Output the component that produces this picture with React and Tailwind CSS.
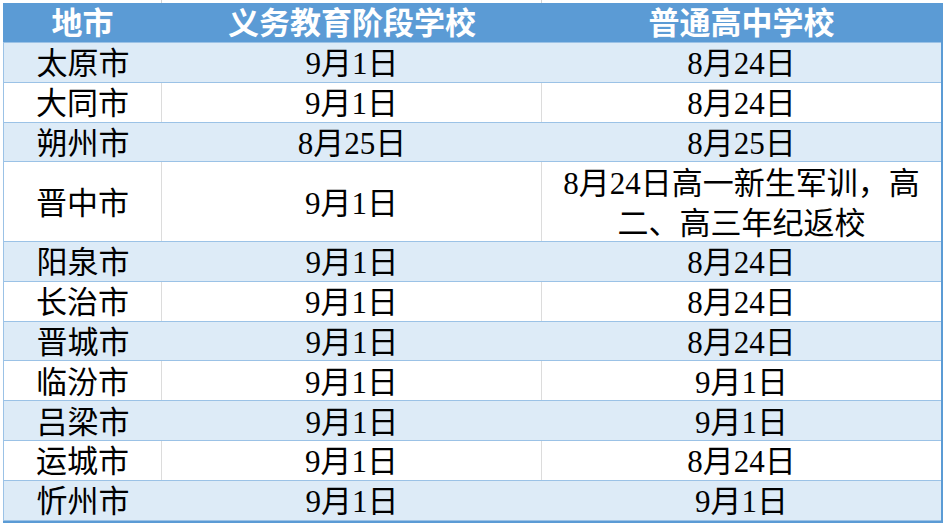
import React from 'react';

const rows = [
    ['太原市', '9月1日', '8月24日'],
    ['大同市', '9月1日', '8月24日'],
    ['朔州市', '8月25日', '8月25日'],
    ['晋中市', '9月1日', ['8月24日高一新生军训，高', '二、高三年纪返校']],
    ['阳泉市', '9月1日', '8月24日'],
    ['长治市', '9月1日', '8月24日'],
    ['晋城市', '9月1日', '8月24日'],
    ['临汾市', '9月1日', '9月1日'],
    ['吕梁市', '9月1日', '9月1日'],
    ['运城市', '9月1日', '8月24日'],
    ['忻州市', '9月1日', '9月1日'],
];

const App = () => {
    return (
        <div className="w-[945px] h-[526px] bg-white overflow-hidden font-['Liberation_Serif','Noto_Sans_CJK_SC',serif] text-black">
            {/* top gridline strip */}
            <div className="h-[3px] flex">
                <div className="w-[162px] border-r border-[#d4d4d4]" />
                <div className="w-[380px] border-r border-[#d4d4d4]" />
            </div>

            <div className="ml-[3px] w-[940px] border-r-2 border-b-2 border-[#5b9bd5]">
                {/* Header */}
                <div className="flex h-[40px] pt-[3px] bg-[#5b9bd5] text-white font-bold text-[31px] border-b border-[#9bc2e6]">
                    <div className="w-[159px] flex items-center justify-center">地市</div>
                    <div className="w-[380px] flex items-center justify-center">义务教育阶段学校</div>
                    <div className="flex-1 flex items-center justify-center">普通高中学校</div>
                </div>

                {rows.map((row, i) => {
                    const banded = i % 2 === 0;
                    const tall = Array.isArray(row[2]);
                    return (
                        <div
                            key={i}
                            className={`flex text-[31px] leading-[40px] border-b border-l border-[#9bc2e6] ${tall ? 'h-[79.6px]' : 'h-[39.8px]'} ${banded ? 'bg-[#ddebf7]' : 'bg-white'}`}
                        >
                            <div className={`w-[158px] pt-[4px] flex items-center justify-center ${banded ? '' : 'border-r border-[#dcdcdc]'}`}>{row[0]}</div>
                            <div className={`w-[380px] pt-[4px] flex items-center justify-center ${banded ? '' : 'border-r border-[#dcdcdc]'}`}>{row[1]}</div>
                            <div className="flex-1 pt-[4px] flex flex-col items-center justify-center">
                                {tall ? row[2].map((line, j) => <span key={j}>{line}</span>) : row[2]}
                            </div>
                        </div>
                    );
                })}
            </div>
        </div>
    );
};

export default App;
